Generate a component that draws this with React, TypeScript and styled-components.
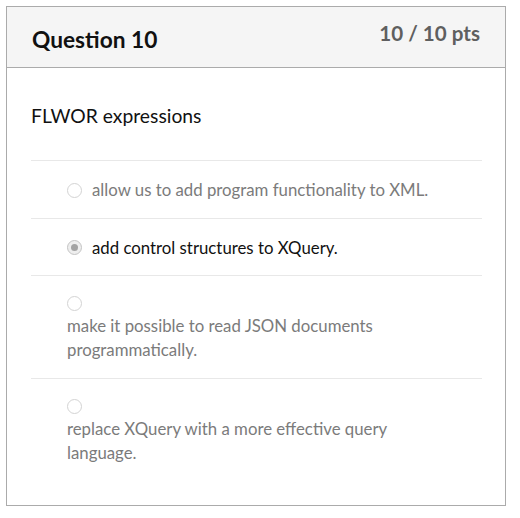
import React from "react";
import styled, { createGlobalStyle } from "styled-components";

const GlobalStyle = createGlobalStyle`
  html, body { margin: 0; padding: 0; background: #ffffff; }
  body { font-family: Lato, "Noto Sans", "Liberation Sans", sans-serif; }
`;

const Page = styled.div`
  padding: 6px 0 0 6px;
`;

const Card = styled.section`
  box-sizing: border-box;
  width: 500px;
  height: 500px;
  border: 1px solid #ababab;
  background: #fff;
  display: flex;
  flex-direction: column;
`;

const Header = styled.header`
  box-sizing: border-box;
  height: 61px;
  background: #f5f5f5;
  border-bottom: 1px solid #ababab;
  padding: 0 25px;
  display: flex;
  justify-content: space-between;
  align-items: flex-start;
`;

const Title = styled.h2`
  margin: 0;
  padding-top: 19px;
  font-size: 22.7px;
  line-height: 1.2;
  font-weight: 700;
  color: #111;
`;

const Points = styled.div`
  padding-top: 14px;
  font-size: 20.6px;
  line-height: 1.2;
  font-weight: 700;
  color: #5f5f5f;
`;

const Body = styled.div`
  padding: 34px 23px 24px 24px;
`;

const QuestionText = styled.p`
  margin: 0 0 30px 0;
  font-size: 19.3px;
  line-height: 28px;
  color: #111;
`;

const AnswerList = styled.div`
  display: flex;
  flex-direction: column;
`;

const Answer = styled.label<{ $selected?: boolean }>`
  border-top: 1px solid #e8e8e8;
  padding: 17px 36px 15.5px 36px;
  display: flex;
  flex-wrap: wrap;
  align-items: center;
  column-gap: 10px;
  font-size: 16.8px;
  line-height: 24px;
  color: ${(p) => (p.$selected ? "#111" : "#7b7b7b")};
`;

const Radio = styled.span<{ $selected?: boolean }>`
  box-sizing: border-box;
  flex: 0 0 auto;
  width: 15px;
  height: 15px;
  margin: 3px 0 3px 0;
  border-radius: 50%;
  border: 1px solid ${(p) => (p.$selected ? "#c4c4c4" : "#d3d3d3")};
  background: ${(p) => (p.$selected ? "#eeeeee" : "#ffffff")};
  display: flex;
  align-items: center;
  justify-content: center;
  &::after {
    content: "";
    display: ${(p) => (p.$selected ? "block" : "none")};
    width: 7px;
    height: 7px;
    border-radius: 50%;
    background: #a3a3a3;
  }
`;

const AnswerText = styled.span`
  flex: 0 1 auto;
`;

const answers = [
  { text: "allow us to add program functionality to XML.", selected: false },
  { text: "add control structures to XQuery.", selected: true },
  { text: "make it possible to read JSON documents programmatically.", selected: false },
  { text: "replace XQuery with a more effective query language.", selected: false },
];

export default function App() {
  return (
    <>
      <GlobalStyle />
      <Page>
        <Card>
          <Header>
            <Title>Question 10</Title>
            <Points>10 / 10 pts</Points>
          </Header>
          <Body>
            <QuestionText>FLWOR expressions</QuestionText>
            <AnswerList>
              {answers.map((a) => (
                <Answer key={a.text} $selected={a.selected}>
                  <Radio $selected={a.selected} />
                  <AnswerText>{a.text}</AnswerText>
                </Answer>
              ))}
            </AnswerList>
          </Body>
        </Card>
      </Page>
    </>
  );
}
